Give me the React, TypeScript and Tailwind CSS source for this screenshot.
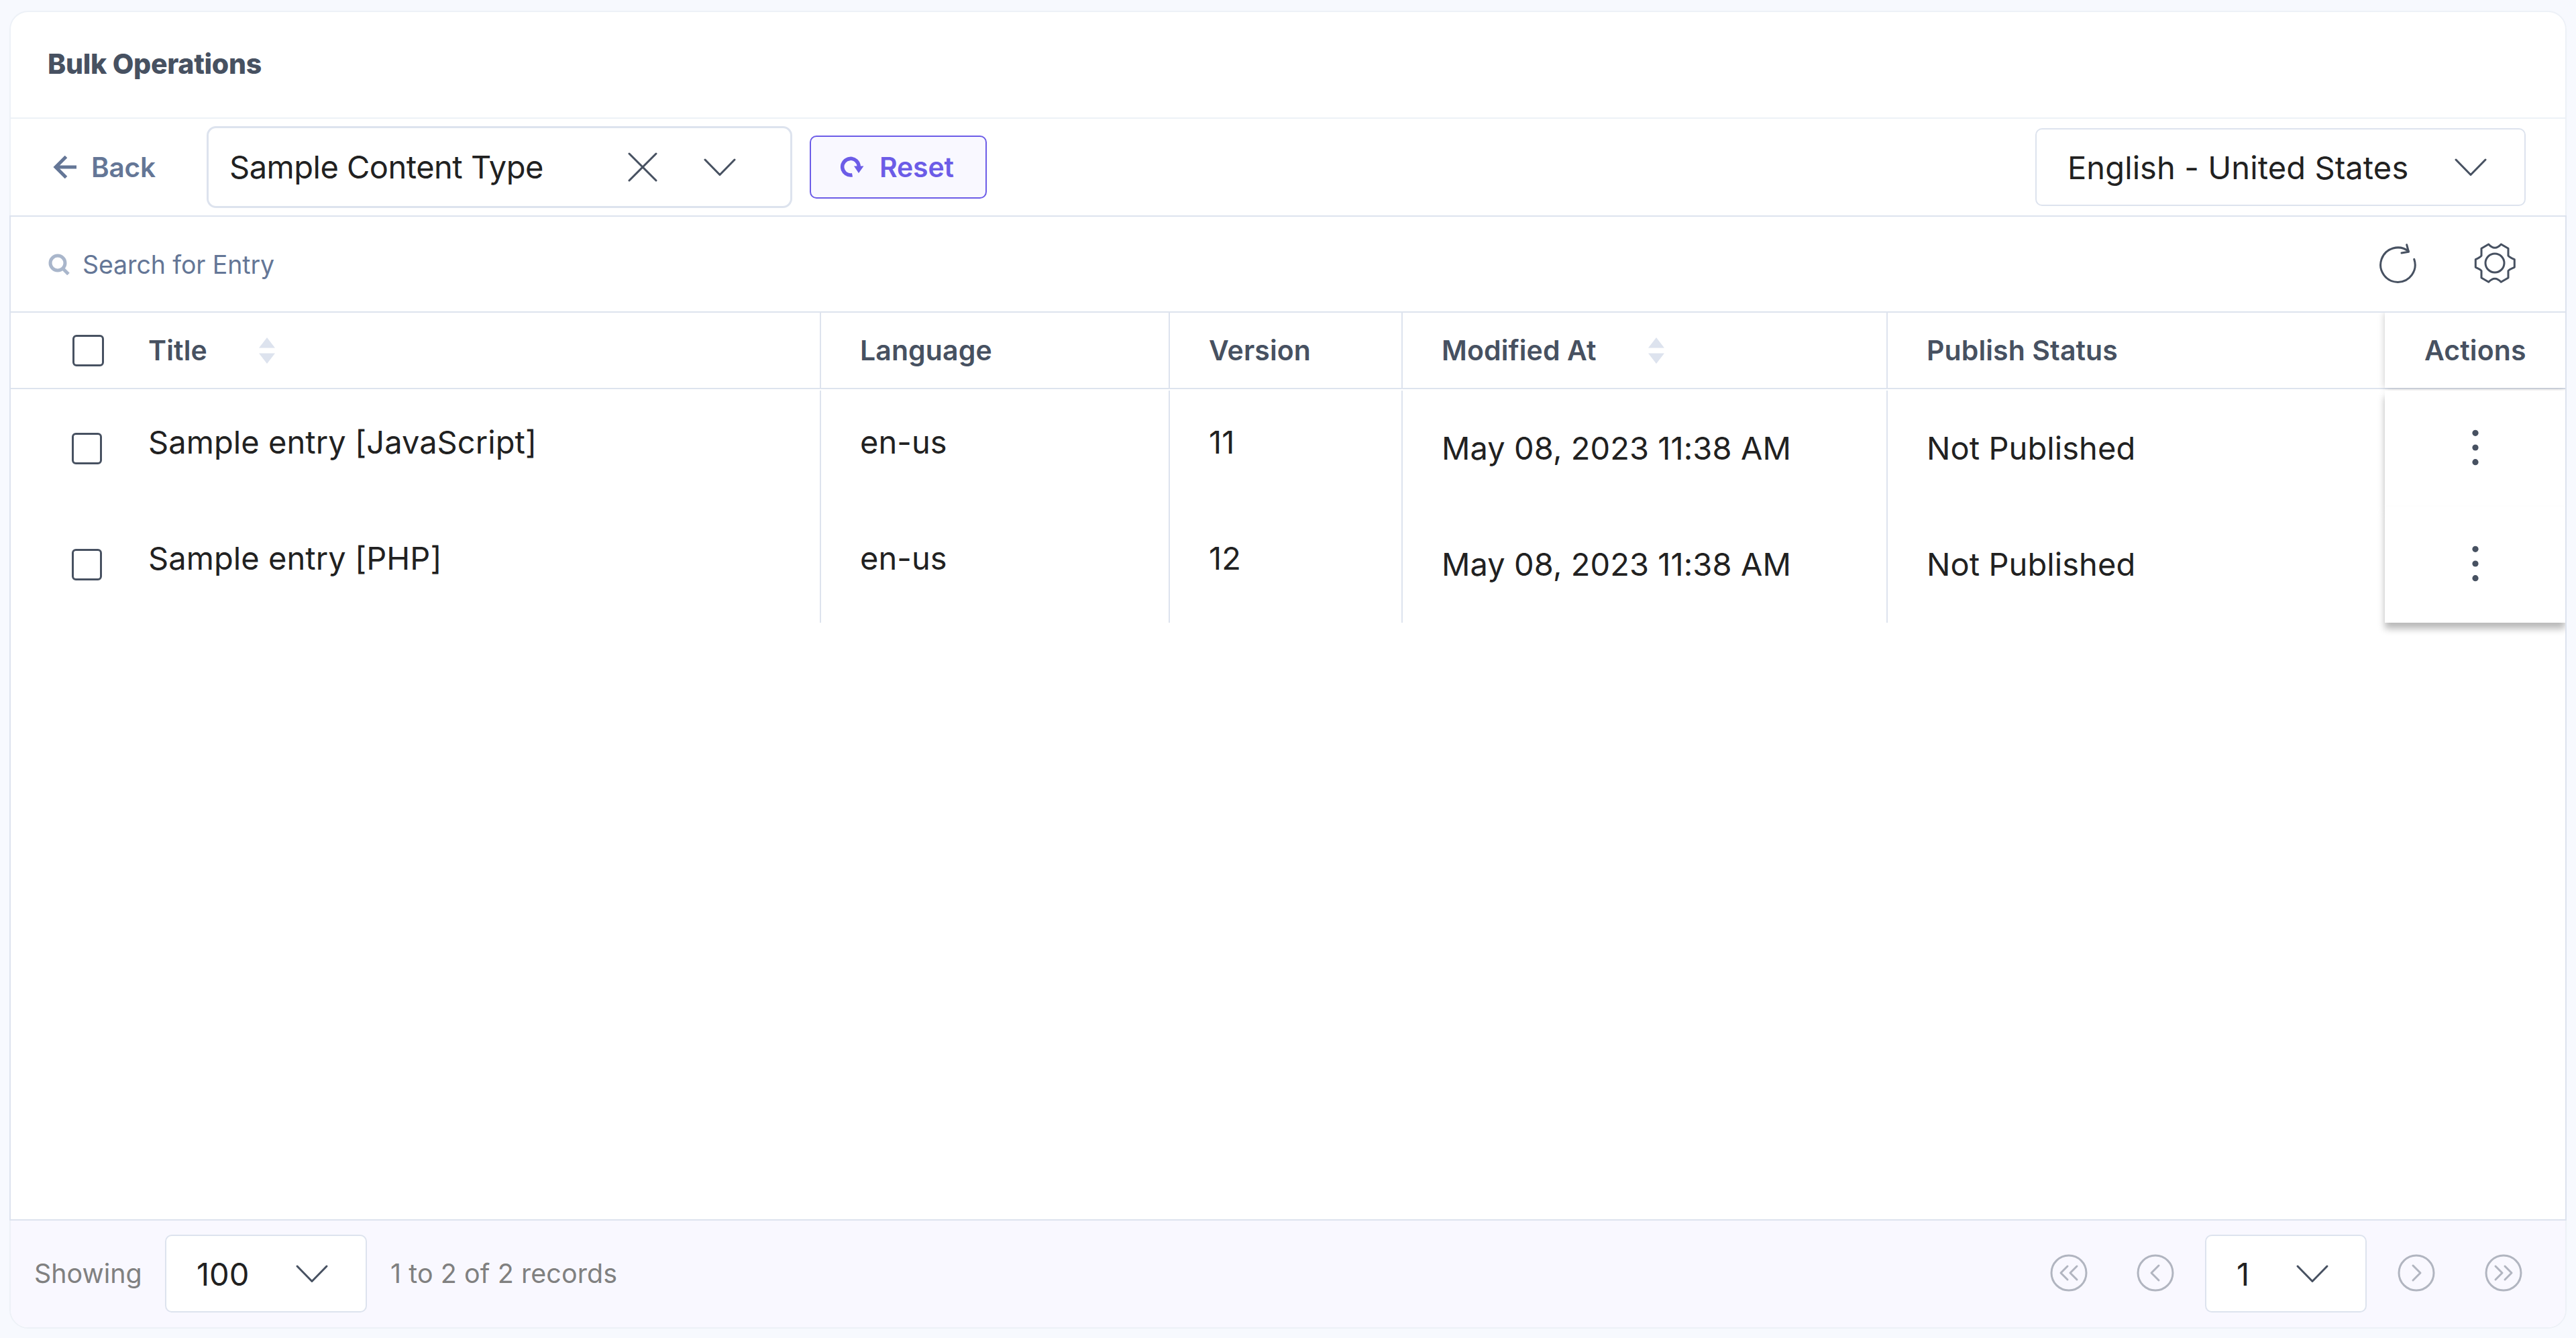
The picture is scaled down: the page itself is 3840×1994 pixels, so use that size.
import type { ReactNode } from "react"

const columns = [
    { label: "Language", width: "w-[520px]" },
    { label: "Version", width: "w-[347px]" },
    { label: "Modified At", width: "w-[723px]", sortable: true },
]

const entries = [
    { title: "Sample entry [JavaScript]", language: "en-us", version: "11", modified: "May 08, 2023 11:38 AM", status: "Not Published" },
    { title: "Sample entry [PHP]", language: "en-us", version: "12", modified: "May 08, 2023 11:38 AM", status: "Not Published" },
]

function Chevron() {
    return (
        <svg className="w-[50px] h-[28px] shrink-0 text-[#475161]" viewBox="0 0 50 28" fill="none" stroke="currentColor" strokeWidth={3} strokeLinecap="round" strokeLinejoin="round">
            <path d="M3 3l22 22.500L47 3" />
        </svg>
    )
}

function SortIcon() {
    return (
        <svg className="w-6 h-[39px]" viewBox="0 0 24 39" fill="#dde3ee">
            <path d="M12 0l12 15.500H0zM12 39L0 23.500h24z" />
        </svg>
    )
}

function PageButton({ children }: { children: ReactNode }) {
    return (
        <svg className="w-14 h-14 mb-[2px]" viewBox="0 0 56 56" fill="none" stroke="#b1b5c0" strokeWidth={3} strokeLinecap="round" strokeLinejoin="round">
            <circle cx="28" cy="28" r="26" />
            {children}
        </svg>
    )
}

function Dots() {
    return (
        <svg className="w-[10px] h-[54px]" viewBox="0 0 10 54" fill="#475161">
            <circle cx="5" cy="5.300" r="4.600" />
            <circle cx="5" cy="27" r="4.600" />
            <circle cx="5" cy="48.700" r="4.600" />
        </svg>
    )
}

function Header() {
    return (
        <div className="h-[159px] shrink-0 border-b-2 border-[#edf1f7] pl-[55px] pt-[47px]">
            <h1 className="text-[41px] leading-[60px] font-extrabold text-[#475161] tracking-[-0.3px]">Bulk Operations</h1>
        </div>
    )
}

function Toolbar() {
    return (
        <div className="h-[144px] shrink-0 flex items-center pl-[62px] pr-[59px]">
            <button className="flex items-center text-[#647696] text-[40.500px] font-semibold w-[230px] tracking-[-0.2px]">
                <svg className="w-[36px] h-[34px] mr-[22px]" viewBox="0 0 36 34" fill="none" stroke="currentColor" strokeWidth={5}>
                    <path d="M36 17H5M20.500 1.500L5 17l15.500 15.500" />
                </svg>
                <span className="pt-[2px]">Back</span>
            </button>
            <div className="w-[873px] h-[122px] border-3 border-[#dde3ee] rounded-[14px] flex items-center pl-[31px] text-[47px] text-[#212121]">
                <span className="w-[594px] tracking-[-0.5px]">Sample Content Type</span>
                <svg className="w-[44px] h-[44px] mr-[68px]" viewBox="0 0 44 44" fill="none" stroke="#475161" strokeWidth={3} strokeLinecap="round">
                    <path d="M2 2l40 40M42 2L2 42" />
                </svg>
                <Chevron />
            </div>
            <button className="ml-[26px] w-[264px] h-[94px] border-2 border-[#6c5ce7] bg-[#f9f8ff] rounded-[10px] flex items-center pl-[43px] text-[#6c5ce7] text-[41px] font-semibold tracking-[-0.2px]">
                <svg className="w-[36px] h-[34px] mr-[23px]" viewBox="0 0 36 34" fill="none" stroke="currentColor" strokeWidth={5.500}>
                    <path d="M18.500 28.700A12.300 12.300 0 1 1 28.300 16.500" />
                    <path d="M21 15.500h14.500L28 26z" fill="currentColor" stroke="none" />
                </svg>
                <span className="pt-[2px]">Reset</span>
            </button>
            <div className="ml-auto w-[731px] h-[116px] border-2 border-[#dde3ee] rounded-[10px] flex items-center justify-between pl-[46px] pr-[55px] text-[47px] text-[#212121] tracking-[0.1px]">
                <span className="pt-[2px]">English - United States</span>
                <Chevron />
            </div>
        </div>
    )
}

function SearchBar() {
    return (
        <div className="h-[145px] shrink-0 border-y-2 border-[#dde3ee] flex items-center pl-[56px] pr-[74px]">
            <svg className="w-[32px] h-[32px] mr-[19px]" viewBox="0 0 32 32" fill="none" stroke="#a9b6cb" strokeWidth={5}>
                <circle cx="14" cy="14" r="11" />
                <path d="M21 21.500l9 9" />
            </svg>
            <span className="pt-[3px] text-[37.500px] text-[#647696] tracking-[-0.1px]">Search for Entry</span>
            <svg className="ml-auto w-[56px] h-[60px] mb-[2px] mr-[86px]" viewBox="0 0 56 60" fill="none" stroke="#475161" strokeWidth={3} strokeLinecap="round" strokeLinejoin="round">
                <path d="M52.700 23.300A25.700 25.700 0 1 1 44.300 11.500" />
                <path d="M41.700 1.800l2.800 10.400L34 14" />
            </svg>
            <svg className="w-[62px] h-[62px] mb-[3px]" viewBox="0 0 62 62" fill="none" stroke="#475161" strokeWidth={3} strokeLinejoin="round">
                <circle cx="31" cy="31" r="14" />
                <path d="M21.700 3Q31 13.500 40.300 3L51 9.300V20Q52 22 60.300 25.700V37.300Q52 40.500 51 42.700V53L40.300 59.300Q31 49 21.700 59.300L11 53V42.700Q10 40.500 2.300 37.300V25.700Q10 22 11 20V9.300Z" />
            </svg>
        </div>
    )
}

function EntryTable() {
    return (
        <div className="flex-1 flex flex-col overflow-hidden text-[47px] text-[#212121]">
            <div className="h-[114px] shrink-0 border-b-2 border-[#dde3ee] flex text-[41px] font-semibold text-[#475161] tracking-[0.1px]">
                <div className="w-[1208px] flex items-center border-r-2 border-[#dde3ee] pl-[92px]">
                    <div className="size-[47px] border-[3.500px] border-[#475161] rounded-[6px]" />
                    <span className="ml-[66px] mr-[77px] pt-[2px]">Title</span>
                    <SortIcon />
                </div>
                {columns.map((column) => (
                    <div key={column.label} className={`${column.width} flex items-center gap-[77px] border-r-2 border-[#dde3ee] pl-[58px]`}>
                        <span className="pt-[2px]">{column.label}</span>
                        {column.sortable && <SortIcon />}
                    </div>
                ))}
                <div className="flex-1 flex items-center pl-[58px] pt-[2px]">Publish Status</div>
                <div className="w-[269px] flex items-center pl-[59px] pt-[2px] bg-white shadow-[0_0_10px_rgba(0,0,0,0.22)]">Actions</div>
            </div>
            <div className="relative mt-[2px]">
                {entries.map((entry) => (
                    <div key={entry.title} className="h-[173px] flex tracking-[0.070px]">
                        <div className="w-[1208px] flex border-r-2 border-[#dde3ee] pl-[91px]">
                            <div className="w-[45px] h-[47px] mt-[63px] border-[3.500px] border-[#475161] rounded-[6px]" />
                            <span className="ml-[69px] mt-[42px]">{entry.title}</span>
                        </div>
                        <div className="w-[520px] border-r-2 border-[#dde3ee] pl-[58px] pt-[42px]">{entry.language}</div>
                        <div className="w-[347px] border-r-2 border-[#dde3ee] pl-[58px] pt-[42px]">{entry.version}</div>
                        <div className="w-[723px] border-r-2 border-[#dde3ee] pl-[58px] pt-[51px]">{entry.modified}</div>
                        <div className="flex-1 pl-[58px] pt-[51px]">{entry.status}</div>
                        <div className="w-[269px] flex justify-center pt-[58px] bg-white shadow-[0_9px_10px_rgba(0,0,0,0.28)]">
                            <Dots />
                        </div>
                    </div>
                ))}
            </div>
        </div>
    )
}

function Footer() {
    return (
        <div className="h-[159px] shrink-0 rounded-b-[26px] bg-[#f9f8ff] flex items-center pl-[35px] pr-[64px] text-[39.400px] text-[#808080]">
            <span className="w-[195px]">Showing</span>
            <div className="w-[301px] h-[116px] mb-px bg-white border-2 border-[#dde3ee] rounded-[10px] flex items-center justify-between pl-[45px] pr-[55px] text-[47px] text-[#212121]">
                <span className="pt-[2px]">100</span>
                <Chevron />
            </div>
            <span className="ml-[35px] pt-px tracking-[0.1px]">1 to 2 of 2 records</span>
            <div className="ml-auto mb-px flex items-center">
                <PageButton>
                    <path d="M26 18l-10 10 10 10M40 18L30 28l10 10" />
                </PageButton>
                <div className="w-[73px]" />
                <PageButton>
                    <path d="M33 17L22 28l11 11" />
                </PageButton>
                <div className="w-[241px] h-[116px] mx-[46px] bg-white border-2 border-[#dde3ee] rounded-[10px] flex items-center justify-between pl-[45px] pr-[54px] text-[47px] text-[#212121]">
                    <span className="pt-[2px]">1</span>
                    <Chevron />
                </div>
                <PageButton>
                    <path d="M23 17l11 11-11 11" />
                </PageButton>
                <div className="w-[74px]" />
                <PageButton>
                    <path d="M16 18l10 10-10 10M30 18l10 10-10 10" />
                </PageButton>
            </div>
        </div>
    )
}

function App() {
    return (
        <div className="h-[1994px] bg-[#f7f9fe] px-[14px] pt-4 pb-[14px] font-[Inter,sans-serif]">
            <div className="h-full flex flex-col bg-white border-2 border-[#edf1f7] rounded-[28px]">
                <Header />
                <Toolbar />
                <div className="flex-1 min-h-0 -mx-[2px] border-x-2 border-b-2 border-[#dde3ee] flex flex-col">
                    <SearchBar />
                    <EntryTable />
                </div>
                <Footer />
            </div>
        </div>
    )
}

export default App
